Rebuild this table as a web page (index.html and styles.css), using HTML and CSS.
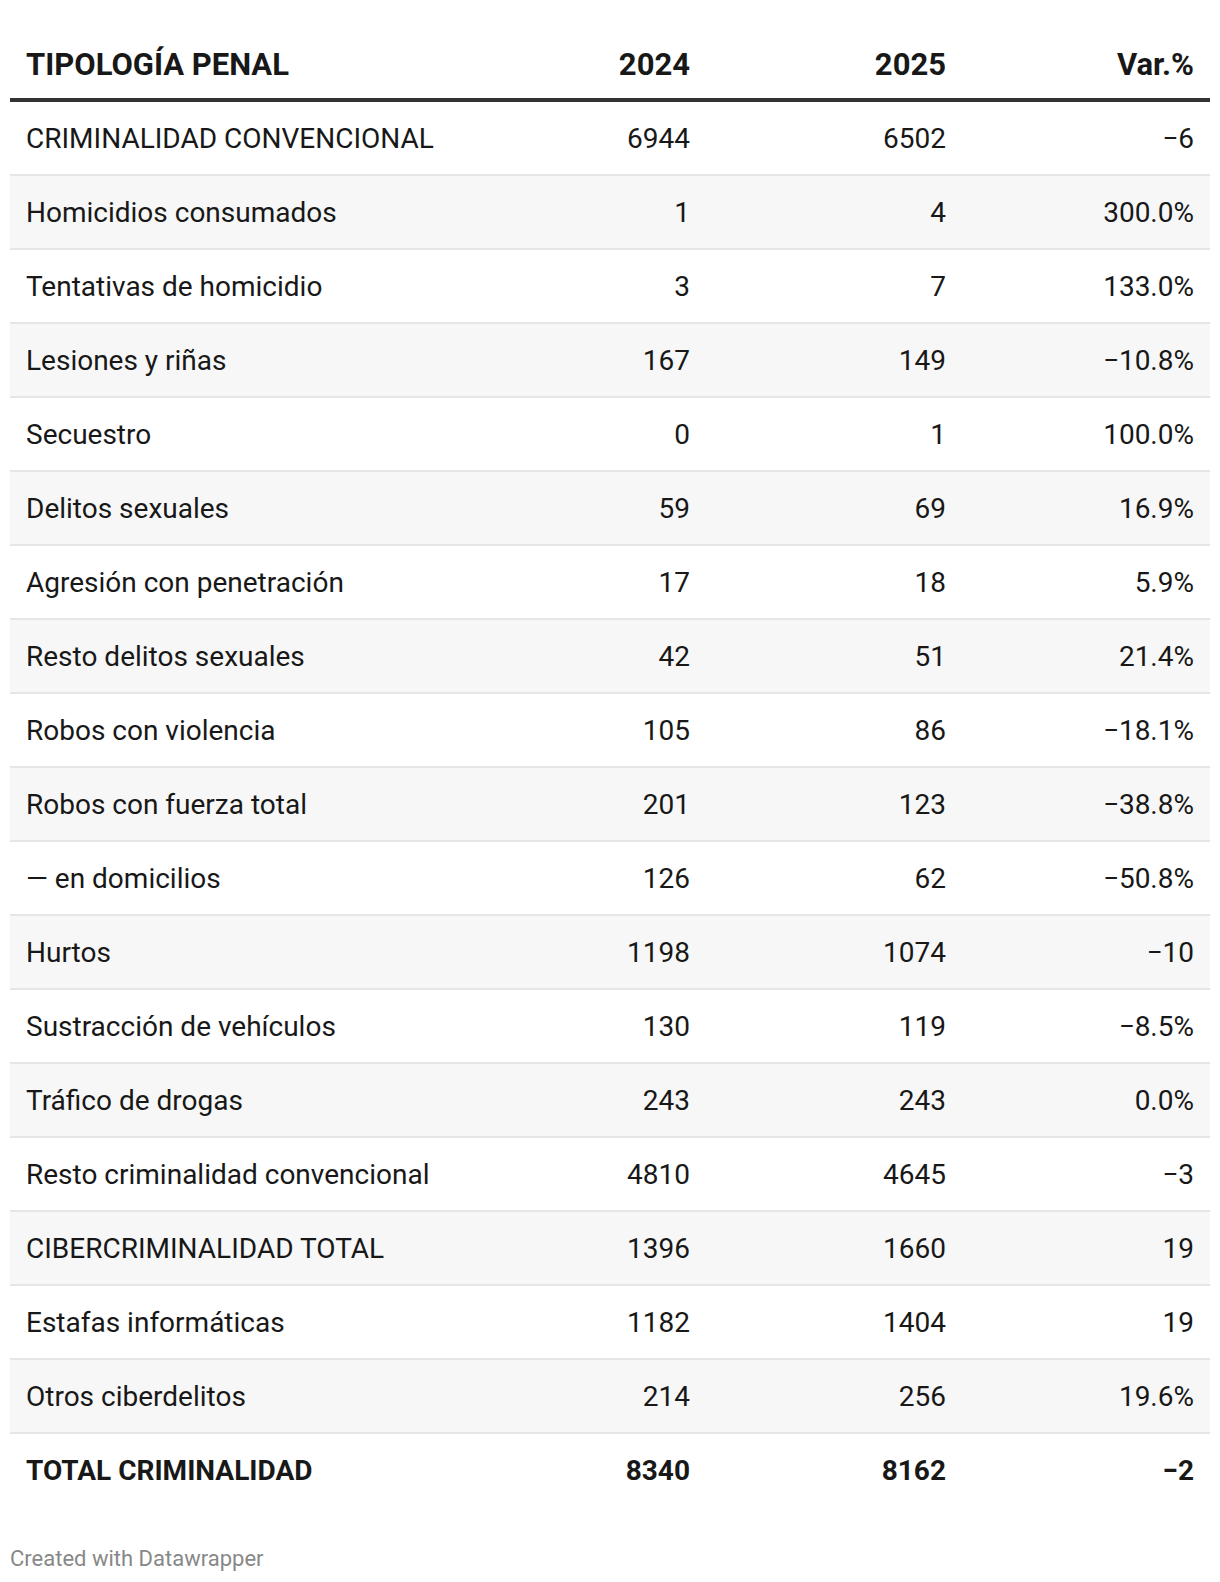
FILE: index.html
```html
<!DOCTYPE html>
<html lang="es">
<head>
<meta charset="utf-8">
<link rel="stylesheet" href="styles.css">
</head>
<body>
<div class="chart">
<table class="dw-table">
<colgroup>
<col class="c1"><col class="c2"><col class="c3"><col class="c4">
</colgroup>
<thead>
<tr><th class="lbl">TIPOLOGÍA PENAL</th><th class="num">2024</th><th class="num">2025</th><th class="num">Var.%</th></tr>
</thead>
<tbody>
<tr><td>CRIMINALIDAD CONVENCIONAL</td><td class="num">6944</td><td class="num">6502</td><td class="num">−6</td></tr>
<tr class="alt"><td>Homicidios consumados</td><td class="num">1</td><td class="num">4</td><td class="num">300.0%</td></tr>
<tr><td>Tentativas de homicidio</td><td class="num">3</td><td class="num">7</td><td class="num">133.0%</td></tr>
<tr class="alt"><td>Lesiones y riñas</td><td class="num">167</td><td class="num">149</td><td class="num">−10.8%</td></tr>
<tr><td>Secuestro</td><td class="num">0</td><td class="num">1</td><td class="num">100.0%</td></tr>
<tr class="alt"><td>Delitos sexuales</td><td class="num">59</td><td class="num">69</td><td class="num">16.9%</td></tr>
<tr><td>Agresión con penetración</td><td class="num">17</td><td class="num">18</td><td class="num">5.9%</td></tr>
<tr class="alt"><td>Resto delitos sexuales</td><td class="num">42</td><td class="num">51</td><td class="num">21.4%</td></tr>
<tr><td>Robos con violencia</td><td class="num">105</td><td class="num">86</td><td class="num">−18.1%</td></tr>
<tr class="alt"><td>Robos con fuerza total</td><td class="num">201</td><td class="num">123</td><td class="num">−38.8%</td></tr>
<tr><td>— en domicilios</td><td class="num">126</td><td class="num">62</td><td class="num">−50.8%</td></tr>
<tr class="alt"><td>Hurtos</td><td class="num">1198</td><td class="num">1074</td><td class="num">−10</td></tr>
<tr><td>Sustracción de vehículos</td><td class="num">130</td><td class="num">119</td><td class="num">−8.5%</td></tr>
<tr class="alt"><td>Tráfico de drogas</td><td class="num">243</td><td class="num">243</td><td class="num">0.0%</td></tr>
<tr><td>Resto criminalidad convencional</td><td class="num">4810</td><td class="num">4645</td><td class="num">−3</td></tr>
<tr class="alt"><td>CIBERCRIMINALIDAD TOTAL</td><td class="num">1396</td><td class="num">1660</td><td class="num">19</td></tr>
<tr><td>Estafas informáticas</td><td class="num">1182</td><td class="num">1404</td><td class="num">19</td></tr>
<tr class="alt"><td>Otros ciberdelitos</td><td class="num">214</td><td class="num">256</td><td class="num">19.6%</td></tr>
<tr class="total"><td>TOTAL CRIMINALIDAD</td><td class="num">8340</td><td class="num">8162</td><td class="num">−2</td></tr>
</tbody>
</table>
<div class="footer">Created with Datawrapper</div>
</div>
</body>
</html>
```
FILE: styles.css
```css
html, body {
  margin: 0;
  padding: 0;
  background: #ffffff;
}
body {
  font-family: Roboto, "Liberation Sans", sans-serif;
  color: #181818;
}
.chart {
  padding: 28px 10px 0 10px;
}
.dw-table {
  width: 1200px;
  border-collapse: collapse;
  table-layout: fixed;
  font-size: 28px;
}
.c1 { width: 446px; }
.c2 { width: 250px; }
.c3 { width: 256px; }
.c4 { width: 248px; }
.dw-table th {
  font-size: 31px;
  font-weight: 700;
  line-height: 34px;
  padding: 20px 16px 16px 16px;
  border-bottom: 4px solid #333333;
  text-align: left;
  white-space: nowrap;
}
.dw-table td {
  line-height: 34px;
  padding: 20px 16px 18px 16px;
  border-bottom: 2px solid #e6e6e6;
  white-space: nowrap;
}
.dw-table .num {
  text-align: right;
}
.dw-table tr.alt td {
  background: #f7f7f7;
}
.dw-table tr.total td {
  font-weight: 700;
  border-bottom: none;
}
.footer {
  margin-top: 41px;
  font-size: 22px;
  line-height: 24px;
  color: #888888;
}
```
